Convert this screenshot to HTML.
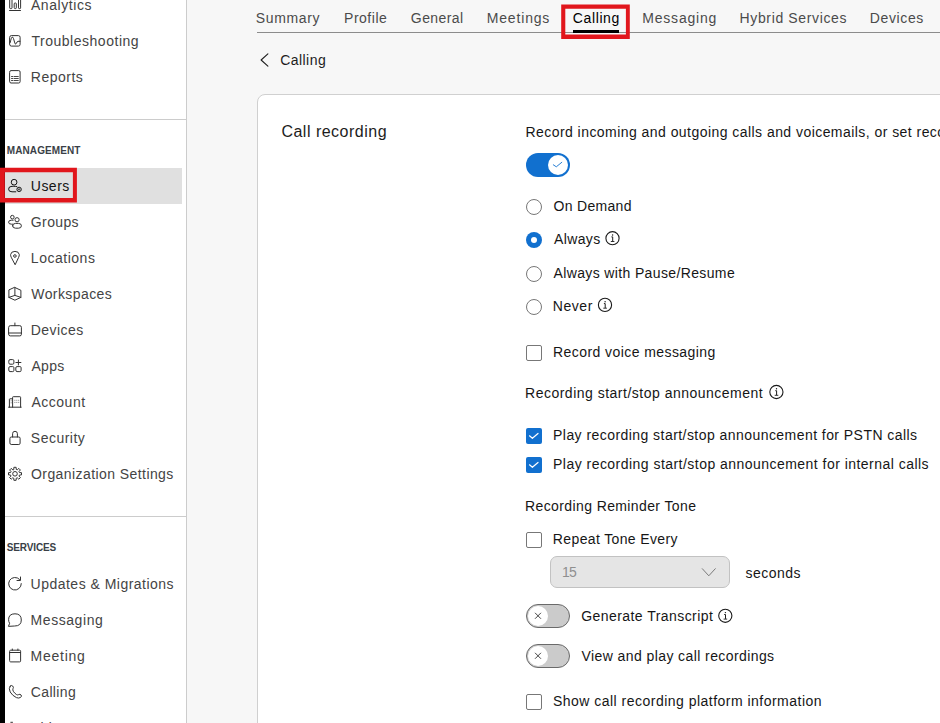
<!DOCTYPE html>
<html><head><meta charset="utf-8"><style>
html,body{margin:0;padding:0;}
body{width:940px;height:723px;overflow:hidden;position:relative;background:#f7f7f7;font-family:"Liberation Sans", sans-serif;}
.t{position:absolute;line-height:20px;white-space:nowrap;}
svg{position:absolute;left:0;top:0;}
</style></head><body>
<div style="position:absolute;left:0px;top:0px;width:187px;height:723px;background:#fff;"></div>
<div style="position:absolute;left:186px;top:0px;width:1px;height:723px;background:#cccccc;"></div>
<div style="position:absolute;left:0px;top:0px;width:5px;height:723px;background:#000;"></div>
<div style="position:absolute;left:5px;top:119px;width:181px;height:1px;background:#cccccc;"></div>
<div style="position:absolute;left:5px;top:516px;width:181px;height:1px;background:#cccccc;"></div>
<div style="position:absolute;left:5px;top:168px;width:177px;height:36px;background:#e0e0e0;"></div>
<div style="position:absolute;left:257px;top:32px;width:683px;height:1px;background:#8c8c8c;"></div>
<div style="position:absolute;left:573px;top:30px;width:46px;height:3px;background:#000;"></div>
<div style="position:absolute;left:257px;top:94px;width:700px;height:700px;box-sizing:border-box;background:#fff;border:1px solid #d0d0d0;border-radius:8px;"></div>
<div style="position:absolute;left:526px;top:153px;width:44px;height:24px;box-sizing:border-box;background:#1170cf;border-radius:12px;"></div>
<div style="position:absolute;left:548px;top:155px;width:20px;height:20px;box-sizing:border-box;background:#fff;border-radius:50%;"></div>
<div style="position:absolute;left:526px;top:199px;width:16px;height:16px;box-sizing:border-box;border-radius:50%;border:1px solid #777;background:#fff;"></div>
<div style="position:absolute;left:526px;top:232px;width:16px;height:16px;box-sizing:border-box;border-radius:50%;background:#1170cf;"></div>
<div style="position:absolute;left:531px;top:237px;width:6px;height:6px;border-radius:50%;background:#fff;"></div>
<div style="position:absolute;left:526px;top:265.5px;width:16px;height:16px;box-sizing:border-box;border-radius:50%;border:1px solid #777;background:#fff;"></div>
<div style="position:absolute;left:526px;top:299px;width:16px;height:16px;box-sizing:border-box;border-radius:50%;border:1px solid #777;background:#fff;"></div>
<div style="position:absolute;left:526px;top:345px;width:16px;height:16px;box-sizing:border-box;border-radius:2px;border:1px solid #777;background:#fff;"></div>
<div style="position:absolute;left:526px;top:428px;width:16px;height:16px;box-sizing:border-box;border-radius:2px;background:#1170cf;"></div>
<div style="position:absolute;left:526px;top:457px;width:16px;height:16px;box-sizing:border-box;border-radius:2px;background:#1170cf;"></div>
<div style="position:absolute;left:526px;top:532px;width:16px;height:16px;box-sizing:border-box;border-radius:2px;border:1px solid #777;background:#fff;"></div>
<div style="position:absolute;left:526px;top:694px;width:16px;height:16px;box-sizing:border-box;border-radius:2px;border:1px solid #777;background:#fff;"></div>
<div style="position:absolute;left:550px;top:556px;width:180px;height:32px;box-sizing:border-box;background:#e5e5e5;border:1px solid #c2c2c2;border-radius:7px;"></div>
<div style="position:absolute;left:526px;top:604px;width:44px;height:24px;box-sizing:border-box;background:#cbcbcb;border:1px solid #6a6a6a;border-radius:12px;"></div>
<div style="position:absolute;left:528px;top:606px;width:20px;height:20px;box-sizing:border-box;background:#fff;border-radius:50%;"></div>
<div style="position:absolute;left:526px;top:644px;width:44px;height:24px;box-sizing:border-box;background:#cbcbcb;border:1px solid #6a6a6a;border-radius:12px;"></div>
<div style="position:absolute;left:528px;top:646px;width:20px;height:20px;box-sizing:border-box;background:#fff;border-radius:50%;"></div>
<div class="t" style="left:30.98px;top:-5.00px;font-size:14px;font-weight:400;color:#444444;letter-spacing:0.561px;">Analytics</div>
<div class="t" style="left:31.39px;top:31.00px;font-size:14px;font-weight:400;color:#444444;letter-spacing:0.528px;">Troubleshooting</div>
<div class="t" style="left:30.76px;top:67.00px;font-size:14px;font-weight:400;color:#444444;letter-spacing:0.517px;">Reports</div>
<div class="t" style="left:30.79px;top:176.00px;font-size:14px;font-weight:400;color:#141414;letter-spacing:0.491px;">Users</div>
<div class="t" style="left:30.87px;top:212.00px;font-size:14px;font-weight:400;color:#444444;letter-spacing:0.360px;">Groups</div>
<div class="t" style="left:30.86px;top:248.00px;font-size:14px;font-weight:400;color:#444444;letter-spacing:0.513px;">Locations</div>
<div class="t" style="left:31.31px;top:284.00px;font-size:14px;font-weight:400;color:#444444;letter-spacing:0.408px;">Workspaces</div>
<div class="t" style="left:30.76px;top:320.00px;font-size:14px;font-weight:400;color:#444444;letter-spacing:0.453px;">Devices</div>
<div class="t" style="left:31.38px;top:356.00px;font-size:14px;font-weight:400;color:#444444;letter-spacing:0.363px;">Apps</div>
<div class="t" style="left:31.38px;top:392.00px;font-size:14px;font-weight:400;color:#444444;letter-spacing:0.531px;">Account</div>
<div class="t" style="left:30.84px;top:428.00px;font-size:14px;font-weight:400;color:#444444;letter-spacing:0.481px;">Security</div>
<div class="t" style="left:31.01px;top:464.00px;font-size:14px;font-weight:400;color:#444444;letter-spacing:0.424px;">Organization Settings</div>
<div class="t" style="left:30.59px;top:574.00px;font-size:14px;font-weight:400;color:#444444;letter-spacing:0.484px;">Updates &amp; Migrations</div>
<div class="t" style="left:30.56px;top:610.00px;font-size:14px;font-weight:400;color:#444444;letter-spacing:0.565px;">Messaging</div>
<div class="t" style="left:30.56px;top:646.00px;font-size:14px;font-weight:400;color:#444444;letter-spacing:0.754px;">Meeting</div>
<div class="t" style="left:30.75px;top:682.00px;font-size:14px;font-weight:400;color:#444444;letter-spacing:0.372px;">Calling</div>
<div class="t" style="left:31.18px;top:718.00px;font-size:14px;font-weight:400;color:#444444;letter-spacing:0.350px;">Vidcast</div>
<div class="t" style="left:6.82px;top:141.00px;font-size:10px;font-weight:700;color:#3a3f47;letter-spacing:0.080px;">MANAGEMENT</div>
<div class="t" style="left:6.80px;top:538.00px;font-size:10px;font-weight:700;color:#3a3f47;letter-spacing:-0.140px;">SERVICES</div>
<div class="t" style="left:255.84px;top:8.00px;font-size:14px;font-weight:400;color:#4b4b4b;letter-spacing:0.631px;">Summary</div>
<div class="t" style="left:344.06px;top:8.00px;font-size:14px;font-weight:400;color:#4b4b4b;letter-spacing:0.514px;">Profile</div>
<div class="t" style="left:410.87px;top:8.00px;font-size:14px;font-weight:400;color:#4b4b4b;letter-spacing:0.415px;">General</div>
<div class="t" style="left:486.76px;top:8.00px;font-size:14px;font-weight:400;color:#4b4b4b;letter-spacing:0.831px;">Meetings</div>
<div class="t" style="left:642.26px;top:8.00px;font-size:14px;font-weight:400;color:#4b4b4b;letter-spacing:0.803px;">Messaging</div>
<div class="t" style="left:739.56px;top:8.00px;font-size:14px;font-weight:400;color:#4b4b4b;letter-spacing:0.636px;">Hybrid Services</div>
<div class="t" style="left:869.86px;top:8.00px;font-size:14px;font-weight:400;color:#4b4b4b;letter-spacing:0.619px;">Devices</div>
<div class="t" style="left:572.85px;top:8.00px;font-size:14px;font-weight:400;color:#000;letter-spacing:0.605px;">Calling</div>
<div class="t" style="left:280.15px;top:50.00px;font-size:14px;font-weight:400;color:#1d1d1d;letter-spacing:0.455px;">Calling</div>
<div class="t" style="left:281.41px;top:122.00px;font-size:16px;font-weight:400;color:#1d1d1d;letter-spacing:0.495px;">Call recording</div>
<div class="t" style="left:525.46px;top:122.00px;font-size:14px;font-weight:400;color:#161616;letter-spacing:0.450px;">Record incoming and outgoing calls and voicemails, or set recording options for this user</div>
<div class="t" style="left:553.51px;top:196.00px;font-size:14px;font-weight:400;color:#161616;letter-spacing:0.304px;">On Demand</div>
<div class="t" style="left:553.88px;top:229.00px;font-size:14px;font-weight:400;color:#161616;letter-spacing:0.413px;">Always</div>
<div class="t" style="left:553.48px;top:263.00px;font-size:14px;font-weight:400;color:#161616;letter-spacing:0.368px;">Always with Pause/Resume</div>
<div class="t" style="left:552.86px;top:296.00px;font-size:14px;font-weight:400;color:#161616;letter-spacing:0.533px;">Never</div>
<div class="t" style="left:553.06px;top:342.00px;font-size:14px;font-weight:400;color:#161616;letter-spacing:0.428px;">Record voice messaging</div>
<div class="t" style="left:525.06px;top:383.00px;font-size:14px;font-weight:400;color:#161616;letter-spacing:0.496px;">Recording start/stop announcement</div>
<div class="t" style="left:553.06px;top:425.00px;font-size:14px;font-weight:400;color:#161616;letter-spacing:0.446px;">Play recording start/stop announcement for PSTN calls</div>
<div class="t" style="left:553.06px;top:454.00px;font-size:14px;font-weight:400;color:#161616;letter-spacing:0.466px;">Play recording start/stop announcement for internal calls</div>
<div class="t" style="left:525.06px;top:496.00px;font-size:14px;font-weight:400;color:#161616;letter-spacing:0.388px;">Recording Reminder Tone</div>
<div class="t" style="left:552.86px;top:529.00px;font-size:14px;font-weight:400;color:#161616;letter-spacing:0.365px;">Repeat Tone Every</div>
<div class="t" style="left:561.99px;top:562.00px;font-size:14px;font-weight:400;color:#8f8f8f;letter-spacing:-0.827px;">15</div>
<div class="t" style="left:745.55px;top:563.00px;font-size:14px;font-weight:400;color:#161616;letter-spacing:0.467px;">seconds</div>
<div class="t" style="left:581.17px;top:606.00px;font-size:14px;font-weight:400;color:#161616;letter-spacing:0.444px;">Generate Transcript</div>
<div class="t" style="left:581.58px;top:646.00px;font-size:14px;font-weight:400;color:#161616;letter-spacing:0.410px;">View and play call recordings</div>
<div class="t" style="left:552.94px;top:691.00px;font-size:14px;font-weight:400;color:#161616;letter-spacing:0.483px;">Show call recording platform information</div>
<svg width="940" height="723" viewBox="0 0 940 723"><path d="M9.5 10.5 H20.5" fill="none" stroke="#333333" stroke-width="1.0" stroke-linecap="round" stroke-linejoin="round" /><path d="M9.7 -2 V7.9 Q9.7 8.6 10.4 8.6 H11.3 Q12 8.6 12 7.9 V-2" fill="none" stroke="#333333" stroke-width="1.0" stroke-linecap="round" stroke-linejoin="round" /><path d="M14.2 3.7 Q14.2 3 14.9 3 H15.6 Q16.3 3 16.3 3.7 V7.9 Q16.3 8.6 15.6 8.6 H14.9 Q14.2 8.6 14.2 7.9 Z" fill="none" stroke="#333333" stroke-width="1.0" stroke-linecap="round" stroke-linejoin="round" /><path d="M18.5 -2 V7.9 Q18.5 8.6 19.2 8.6 H19.9 Q20.6 8.6 20.6 7.9 V-2" fill="none" stroke="#333333" stroke-width="1.0" stroke-linecap="round" stroke-linejoin="round" /><path d="M9.6 37.3 Q9.6 35.6 11.3 35.6 H18.4 Q20.1 35.6 20.1 37.3 V44.4 Q20.1 46.1 18.4 46.1 H11.3 Q9.6 46.1 9.6 44.4 Z" fill="none" stroke="#333333" stroke-width="1.0" stroke-linecap="round" stroke-linejoin="round" /><path d="M10.2 42.5 Q11.5 36.5 12.5 37 Q13.5 37.5 14.5 42 Q15.3 45.5 16.3 43.5 Q17 41.5 18 41.3 H20" fill="none" stroke="#333333" stroke-width="1.0" stroke-linecap="round" stroke-linejoin="round" /><path d="M9.6 72 Q9.6 70.6 11 70.6 H18.7 Q20.1 70.6 20.1 72 V81.6 Q20.1 83 18.7 83 H11 Q9.6 83 9.6 81.6 Z" fill="none" stroke="#333333" stroke-width="1.0" stroke-linecap="round" stroke-linejoin="round" /><path d="M11.5 76.5 H12.7 M14 76.5 H18.3 M11.5 78.5 H12.7 M14 78.5 H18.3 M11.5 80.5 H12.7 M14 80.5 H18.3" fill="none" stroke="#333333" stroke-width="0.9" stroke-linecap="round" stroke-linejoin="round" /><circle cx="14.1" cy="182.2" r="2.85" fill="none" stroke="#141414" stroke-width="1.0"/><path d="M16.8 186.6 Q15.8 186.3 13.8 186.3 H12 Q8.6 186.3 8.6 189.1 Q8.6 191.8 12 191.8 H15.8" fill="none" stroke="#141414" stroke-width="1.0" stroke-linecap="round" stroke-linejoin="round" /><circle cx="19.1" cy="189.4" r="2.2" fill="none" stroke="#141414" stroke-width="1.0"/><circle cx="19.1" cy="189.4" r="0.7" fill="none" stroke="#141414" stroke-width="0.8"/><circle cx="12.35" cy="217.15" r="1.8" fill="none" stroke="#333333" stroke-width="1.0"/><circle cx="17.05" cy="219.75" r="2.1" fill="none" stroke="#333333" stroke-width="1.0"/><path d="M13.2 220.2 H11.5 Q8.6 220.2 8.6 222.2 Q8.6 224.2 11.5 224.2 H12.6" fill="none" stroke="#333333" stroke-width="1.0" stroke-linecap="round" stroke-linejoin="round" /><path d="M12.6 225.8 Q12.6 223.4 15.5 223.4 H18.5 Q21.4 223.4 21.4 225.8 Q21.4 228.2 18.5 228.2 H15.5 Q12.6 228.2 12.6 225.8 Z" fill="none" stroke="#333333" stroke-width="1.0" stroke-linecap="round" stroke-linejoin="round" /><path d="M14.95 264.4 L11.2 257.2 Q10.5 255.8 10.6 254.6 Q11 251.4 14.95 251.4 Q18.9 251.4 19.3 254.6 Q19.4 255.8 18.7 257.2 Z" fill="none" stroke="#333333" stroke-width="1.0" stroke-linecap="round" stroke-linejoin="round" /><circle cx="14.9" cy="256" r="1.3" fill="none" stroke="#333333" stroke-width="1.0"/><path d="M14.9 287.5 L20.9 290.3 V297.4 L14.9 300.2 L8.9 297.4 V290.3 Z" fill="none" stroke="#333333" stroke-width="1.0" stroke-linecap="round" stroke-linejoin="round" /><path d="M14.9 287.5 V295.4 L8.9 297.4 M14.9 295.4 L20.9 297.4" fill="none" stroke="#333333" stroke-width="1.0" stroke-linecap="round" stroke-linejoin="round" /><path d="M8.6 327.3 Q8.6 325.7 10.2 325.7 H19.8 Q21.4 325.7 21.4 327.3 V334.3 Q21.4 335.9 19.8 335.9 H10.2 Q8.6 335.9 8.6 334.3 Z" fill="none" stroke="#333333" stroke-width="1.0" stroke-linecap="round" stroke-linejoin="round" /><path d="M8.6 333 H21.4 M14.9 323 V325.7" fill="none" stroke="#333333" stroke-width="1.0" stroke-linecap="round" stroke-linejoin="round" /><path d="M8.8 360.8 Q8.8 359.6 10 359.6 H12.7 Q13.9 359.6 13.9 360.8 V363 Q13.9 364.2 12.7 364.2 H10 Q8.8 364.2 8.8 363 Z" fill="none" stroke="#333333" stroke-width="1.0" stroke-linecap="round" stroke-linejoin="round" /><path d="M8.8 367.6 Q8.8 366.6 10 366.6 H12.7 Q13.9 366.6 13.9 367.6 V370.4 Q13.9 371.6 12.7 371.6 H10 Q8.8 371.6 8.8 370.4 Z" fill="none" stroke="#333333" stroke-width="1.0" stroke-linecap="round" stroke-linejoin="round" /><path d="M15.8 367.6 Q15.8 366.6 17 366.6 H19.9 Q21.1 366.6 21.1 367.6 V370.4 Q21.1 371.6 19.9 371.6 H17 Q15.8 371.6 15.8 370.4 Z" fill="none" stroke="#333333" stroke-width="1.0" stroke-linecap="round" stroke-linejoin="round" /><path d="M18.4 360 V365 M15.9 362.5 H20.9" fill="none" stroke="#333333" stroke-width="1.0" stroke-linecap="round" stroke-linejoin="round" /><path d="M9.4 407.2 V399.3 Q9.4 398.8 10 398.8 H12.6 M12.6 407.2 V397.3 Q12.6 396.7 13.3 396.7 H19.9 Q20.6 396.7 20.6 397.3 V407.2 M8.6 407.2 H21.2" fill="none" stroke="#333333" stroke-width="1.0" stroke-linecap="round" stroke-linejoin="round" /><path d="M14.4 400.3 H19.2 M14.4 402.4 H19.2" fill="none" stroke="#666" stroke-width="0.8" stroke-linejoin="round" stroke-dasharray="1 0.9" stroke-linecap="butt"/><path d="M10.6 400.8 H11.8 M10.6 402.8 H11.8" fill="none" stroke="#777" stroke-width="0.8" stroke-linejoin="round" stroke-linecap="butt"/><path d="M9.9 438.3 Q9.9 437 11.2 437 H18.8 Q20.1 437 20.1 438.3 V443.2 Q20.1 444.5 18.8 444.5 H11.2 Q9.9 444.5 9.9 443.2 Z" fill="none" stroke="#333333" stroke-width="1.0" stroke-linecap="round" stroke-linejoin="round" /><path d="M12.6 437 V433.7 Q12.6 431.3 15 431.3 Q17.4 431.3 17.4 433.7 V437" fill="none" stroke="#333333" stroke-width="1.0" stroke-linecap="round" stroke-linejoin="round" /><circle cx="15" cy="473.8" r="2.3" fill="none" stroke="#333333" stroke-width="1.0"/><path d="M13.77 469.37 L13.88 467.30 L16.12 467.30 L16.23 469.37 L17.27 469.80 L18.81 468.41 L20.39 469.99 L19.00 471.53 L19.43 472.57 L21.50 472.68 L21.50 474.92 L19.43 475.03 L19.00 476.07 L20.39 477.61 L18.81 479.19 L17.27 477.80 L16.23 478.23 L16.12 480.30 L13.88 480.30 L13.77 478.23 L12.73 477.80 L11.19 479.19 L9.61 477.61 L11.00 476.07 L10.57 475.03 L8.50 474.92 L8.50 472.68 L10.57 472.57 L11.00 471.53 L9.61 469.99 L11.19 468.41 L12.73 469.80 Z" fill="none" stroke="#333333" stroke-width="1" stroke-linecap="round" stroke-linejoin="round" /><path d="M21.3 583.6 A6.3 6.3 0 1 1 19.6 579.4" fill="none" stroke="#333333" stroke-width="1.0" stroke-linecap="round" stroke-linejoin="round" /><path d="M20.5 577 V580.5 H17" fill="none" stroke="#333333" stroke-width="1.0" stroke-linecap="round" stroke-linejoin="round" /><path d="M8.6 626 L9.6 623.3 Q8.6 621.8 8.6 619.6 Q8.6 613.8 15 613.8 Q21.3 613.8 21.3 620 Q21.3 626 15 626 Z" fill="none" stroke="#333333" stroke-width="1.0" stroke-linecap="round" stroke-linejoin="round" /><path d="M9.6 651.2 Q9.6 650.2 10.6 650.2 H19.6 Q20.6 650.2 20.6 651.2 V660.9 Q20.6 661.9 19.6 661.9 H10.6 Q9.6 661.9 9.6 660.9 Z M9.6 652.5 H20.6 M12.3 649 V650.2 M17.9 649 V650.2" fill="none" stroke="#333333" stroke-width="1.0" stroke-linecap="round" stroke-linejoin="round" /><path d="M10.2 686.1 Q11.5 684.8 12.7 686 Q13.9 687.4 13 688.7 Q12.5 689.7 13.3 691.3 Q14.8 693.6 16.6 694.6 Q17.8 695.3 18.6 694.6 Q20 693.8 21.1 695 Q22 696.3 20.6 697.4 Q18.8 698.6 16.4 697.6 Q12.4 695.7 10.2 692 Q8.3 688.4 10.2 686.1 Z" fill="none" stroke="#333333" stroke-width="1.0" stroke-linecap="round" stroke-linejoin="round" /><path d="M10.8 722.3 H12.5" fill="none" stroke="#333333" stroke-width="1.0" stroke-linecap="round" stroke-linejoin="round" /><path d="M267.9 53.8 L261.1 60 L267.9 66.2" fill="none" stroke="#1d1d1d" stroke-width="1.1" stroke-linecap="round" stroke-linejoin="round" /><path d="M612.5 238.2 m-6.6 0 a6.6 6.6 0 1 0 13.2 0 a6.6 6.6 0 1 0 -13.2 0" fill="none" stroke="#1a1a1a" stroke-width="1.1" stroke-linecap="round" stroke-linejoin="round" /><path d="M611.4 236.89999999999998 H612.7 V241.29999999999998" fill="none" stroke="#1a1a1a" stroke-width="1.0" stroke-linejoin="round" stroke-linecap="butt"/><path d="M610.8 241.5 H614.4" fill="none" stroke="#1a1a1a" stroke-width="0.9" stroke-linejoin="round" stroke-linecap="butt"/><circle cx="612.6" cy="235.0" r="0.7" fill="#1a1a1a"/><path d="M605 304.9 m-6.6 0 a6.6 6.6 0 1 0 13.2 0 a6.6 6.6 0 1 0 -13.2 0" fill="none" stroke="#1a1a1a" stroke-width="1.1" stroke-linecap="round" stroke-linejoin="round" /><path d="M603.9 303.59999999999997 H605.2 V308.0" fill="none" stroke="#1a1a1a" stroke-width="1.0" stroke-linejoin="round" stroke-linecap="butt"/><path d="M603.3 308.2 H606.9" fill="none" stroke="#1a1a1a" stroke-width="0.9" stroke-linejoin="round" stroke-linecap="butt"/><circle cx="605.1" cy="301.7" r="0.7" fill="#1a1a1a"/><path d="M776.4 392 m-6.6 0 a6.6 6.6 0 1 0 13.2 0 a6.6 6.6 0 1 0 -13.2 0" fill="none" stroke="#1a1a1a" stroke-width="1.1" stroke-linecap="round" stroke-linejoin="round" /><path d="M775.3 390.7 H776.6 V395.1" fill="none" stroke="#1a1a1a" stroke-width="1.0" stroke-linejoin="round" stroke-linecap="butt"/><path d="M774.6999999999999 395.3 H778.3" fill="none" stroke="#1a1a1a" stroke-width="0.9" stroke-linejoin="round" stroke-linecap="butt"/><circle cx="776.5" cy="388.8" r="0.7" fill="#1a1a1a"/><path d="M725.3 615.8 m-6.6 0 a6.6 6.6 0 1 0 13.2 0 a6.6 6.6 0 1 0 -13.2 0" fill="none" stroke="#1a1a1a" stroke-width="1.1" stroke-linecap="round" stroke-linejoin="round" /><path d="M724.1999999999999 614.5 H725.5 V618.9" fill="none" stroke="#1a1a1a" stroke-width="1.0" stroke-linejoin="round" stroke-linecap="butt"/><path d="M723.5999999999999 619.0999999999999 H727.1999999999999" fill="none" stroke="#1a1a1a" stroke-width="0.9" stroke-linejoin="round" stroke-linecap="butt"/><circle cx="725.4" cy="612.5999999999999" r="0.7" fill="#1a1a1a"/><path d="M553.3 164.8 L556.3 166.8 L561.8 162.3" fill="none" stroke="#1170cf" stroke-width="0.9" stroke-linecap="round" stroke-linejoin="round" /><path d="M529.5 435.8 L532.4 438.3 L538 433.5" fill="none" stroke="#fff" stroke-width="1.2" stroke-linecap="round" stroke-linejoin="round" /><path d="M529.5 464.8 L532.4 467.3 L538 462.5" fill="none" stroke="#fff" stroke-width="1.2" stroke-linecap="round" stroke-linejoin="round" /><path d="M702.3 568.7 L708.8 575.8 L715.3 568.7" fill="none" stroke="#7a7a7a" stroke-width="1" stroke-linecap="round" stroke-linejoin="round" /><path d="M535.3 613.1 L540.7 618.5 M540.7 613.1 L535.3 618.5" fill="none" stroke="#333" stroke-width="0.9" stroke-linecap="round" stroke-linejoin="round" /><path d="M535.3 653.1 L540.7 658.5 M540.7 653.1 L535.3 658.5" fill="none" stroke="#333" stroke-width="0.9" stroke-linecap="round" stroke-linejoin="round" /><path fill-rule="evenodd" fill="#e1161c" d="M0 167.7 H76.9 V202.4 H0 Z M4.85 172.2 V198.1 H72.9 V172.2 Z"/><path fill-rule="evenodd" fill="#e1161c" d="M561.2 4.5 H629.8 V38.9 H561.2 Z M565.3 8.7 V34.6 H625.9 V8.7 Z"/></svg>
</body></html>
